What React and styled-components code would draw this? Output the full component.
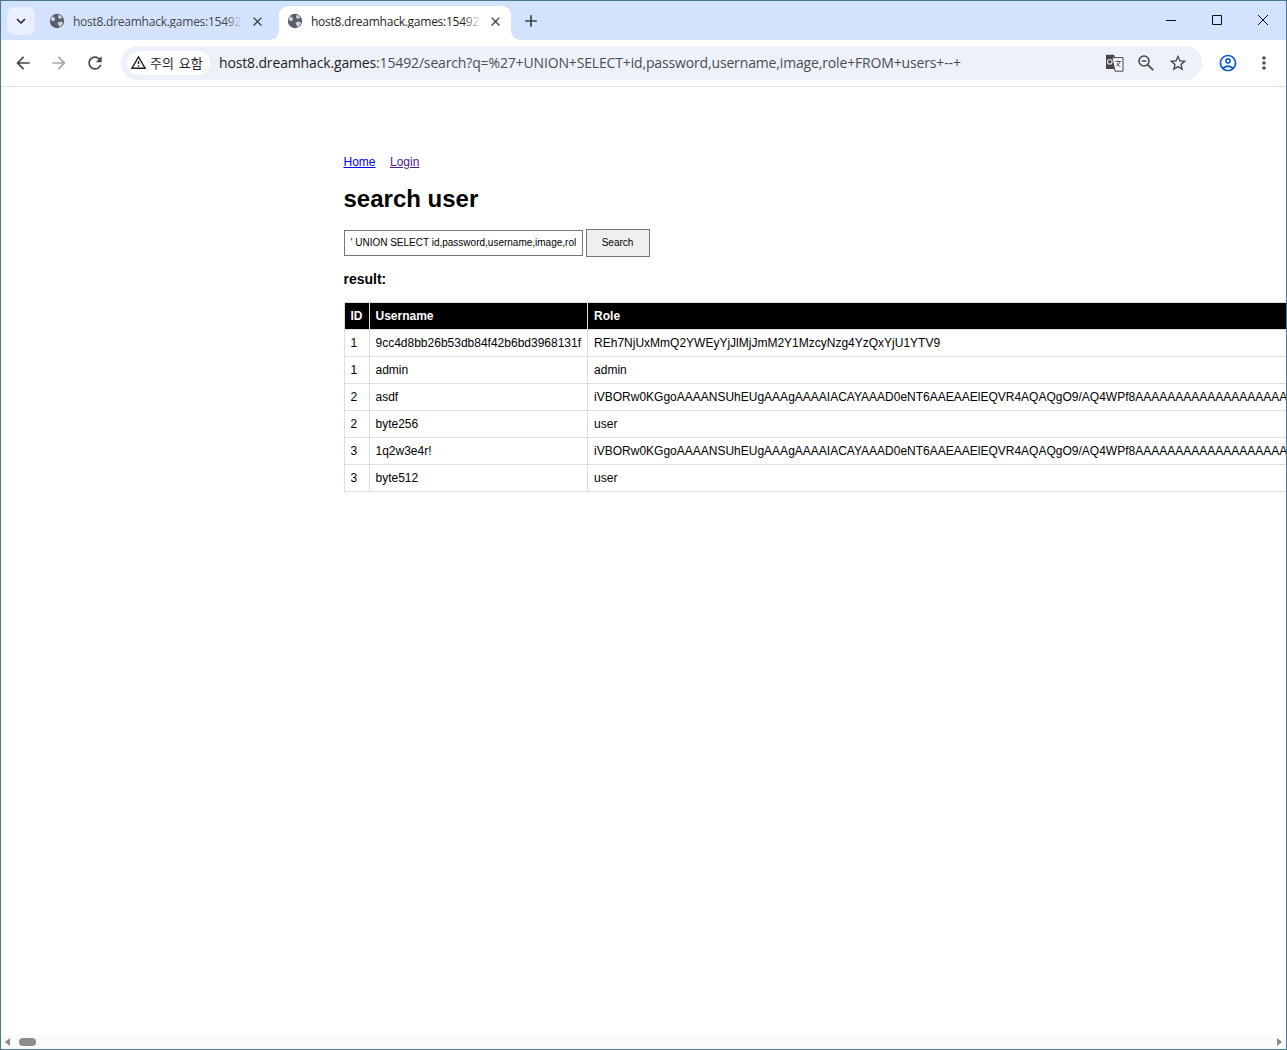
import React from 'react'
import styled, {createGlobalStyle} from 'styled-components'
import {
    MdAdd, MdArrowBack, MdArrowForward, MdClose, MdKeyboardArrowDown, MdMoreVert, MdOutlineAccountCircle,
    MdOutlineStarBorder, MdOutlineWarningAmber, MdRefresh
} from 'react-icons/md'

const URL_HOST = "host8.dreamhack.games"
const URL_REST = ":15492/search?q=%27+UNION+SELECT+id,password,username,image,role+FROM+users+--+"
const QUERY = "' UNION SELECT id,password,username,image,role FROM users-- "
const PNG = "iVBORw0KGgoAAAANSUhEUgAAAgAAAAIACAYAAAD0eNT6AAEAAElEQVR4AQAQgO9/AQ4WPf8" + "A".repeat(120)

const rows = [
    {id: 1, username: "9cc4d8bb26b53db84f42b6bd3968131f", role: "REh7NjUxMmQ2YWEyYjJlMjJmM2Y1MzcyNzg4YzQxYjU1YTV9"},
    {id: 1, username: "admin", role: "admin"},
    {id: 2, username: "asdf", role: PNG},
    {id: 2, username: "byte256", role: "user"},
    {id: 3, username: "1q2w3e4r!", role: PNG},
    {id: 3, username: "byte512", role: "user"},
]

const GlobalStyle = createGlobalStyle`
    html, body {
        margin: 0;
        padding: 0;
        overflow: hidden;
        background: #fff;
    }
`
const Win = styled.div`
    box-sizing: border-box;
    width: 1287px;
    height: 1050px;
    display: flex;
    flex-direction: column;
    border: 1px solid #4b7a8c;
    overflow: hidden;
    background: #fff;
`
const TabStrip = styled.div`
    height: 39px;
    flex: none;
    display: flex;
    align-items: flex-end;
    background: #d3e3fd;
    padding-left: 6px;
    color: #1f1f1f;
`
const TabSearch = styled.button`
    width: 28px;
    height: 28px;
    margin-bottom: 5px;
    padding: 0;
    border: none;
    border-radius: 8px;
    background: #e8f0fe;
    color: #1f1f1f;
    display: flex;
    align-items: center;
    justify-content: center;
    font-size: 18px;
`
const Tab = styled.div`
    position: relative;
    box-sizing: border-box;
    width: 232px;
    height: 34px;
    margin-left: 6px;
    padding: 0 8px 4px 8px;
    display: flex;
    align-items: center;
    border-radius: 9px 9px 0 0;
    background: ${props => props.$active ? "#fff" : "transparent"};
    &::before, &::after {
        content: "";
        display: ${props => props.$active ? "block" : "none"};
        position: absolute;
        bottom: 0;
        width: 9px;
        height: 9px;
    }
    &::before {
        left: -9px;
        background: radial-gradient(circle at 0 0, transparent 8.5px, #fff 9px);
    }
    &::after {
        right: -9px;
        background: radial-gradient(circle at 100% 0, transparent 8.5px, #fff 9px);
    }
`
const TabTitle = styled.div`
    position: relative;
    flex: 1;
    height: 14px;
    margin-left: 8px;
    overflow: hidden;
    white-space: nowrap;
    font: 12px/15px "Open Sans", sans-serif;
    letter-spacing: -0.25px;
    color: ${props => props.$active ? "#1f1f1f" : "#45474a"};
    &::after {
        content: "";
        position: absolute;
        top: 0;
        right: 0;
        bottom: 0;
        width: 18px;
        background: linear-gradient(to right, transparent, ${props => props.$active ? "#fff" : "#d3e3fd"});
    }
`
const TabClose = styled(MdClose)`
    flex: none;
    margin-left: 7px;
    font-size: 15px;
    color: #3c4043;
`
const NewTab = styled(MdAdd)`
    flex: none;
    margin: 0 0 9px 10px;
    font-size: 20px;
    color: #3c4043;
`
const WinControls = styled.div`
    display: flex;
    align-self: flex-start;
    margin-left: auto;
`
const WinBtn = styled.div`
    width: 46px;
    height: 38px;
    display: flex;
    align-items: center;
    justify-content: center;
`
const Toolbar = styled.div`
    box-sizing: border-box;
    height: 47px;
    flex: none;
    display: flex;
    align-items: center;
    padding: 0 0 1px 4px;
    background: #fff;
    border-radius: 9px 9px 0 0;
    border-bottom: 1px solid #dfe1e5;
    color: #474747;
`
const NavBtn = styled.div`
    width: 36px;
    height: 34px;
    display: flex;
    align-items: center;
    justify-content: center;
    font-size: 20px;
    color: ${props => props.$muted ? "#a8a8a8" : props.$accent ? "#0b57d0" : "#474747"};
`
const Omnibox = styled.div`
    flex: none;
    width: 1081px;
    height: 34px;
    margin-left: 8px;
    padding: 0 8px 0 6px;
    box-sizing: border-box;
    display: flex;
    align-items: center;
    border-radius: 17px;
    background: #edf2fa;
`
const SecurityChip = styled.div`
    box-sizing: border-box;
    width: 83px;
    height: 24px;
    padding-left: 3px;
    display: flex;
    align-items: center;
    gap: 3px;
    border-radius: 12px;
    background: #fff;
    color: #1f1f1f;
    font: 13px "Noto Sans CJK KR", sans-serif;
    word-spacing: 2px;
    white-space: nowrap;
    svg {
        font-size: 17px;
        flex: none;
    }
`
const UrlText = styled.div`
    flex: 1;
    margin-left: 9px;
    white-space: nowrap;
    overflow: hidden;
    font: 14px "Open Sans", sans-serif;
    letter-spacing: -0.15px;
    color: #4a4d52;
    b {
        font-weight: 400;
        color: #1f1f1f;
    }
`
const BoxIcon = styled.div`
    width: 32px;
    height: 24px;
    display: flex;
    align-items: center;
    justify-content: center;
    font-size: 20px;
    color: #474747;
`
const ToolbarEnd = styled.div`
    display: flex;
    align-items: center;
    margin-left: 8px;
`
const Page = styled.main`
    flex: 1;
    min-height: 0;
    overflow: hidden;
    padding: 68px 0 0 342.5px;
    font-family: "Liberation Sans", Arial, sans-serif;
    color: #000;
`
const Nav = styled.nav`
    display: flex;
    gap: 14.5px;
    font-size: 12px;
    line-height: 14px;
`
const NavLink = styled.a`
    color: ${props => props.$visited ? "#551a8b" : "#0000ee"};
    text-decoration: underline;
`
const Heading = styled.h1`
    margin: 16px 0 0;
    font-size: 24px;
    line-height: 28px;
    font-weight: 700;
`
const SearchForm = styled.form`
    display: flex;
    align-items: center;
    gap: 3px;
    margin-top: 16px;
`
const SearchInput = styled.input`
    box-sizing: border-box;
    width: 239px;
    height: 26px;
    padding: 0 6px 2px;
    border: 1px solid #767676;
    border-radius: 0;
    outline: none;
    background: #fff;
    color: #000;
    font: 10px "Liberation Sans", Arial, sans-serif;
`
const SearchButton = styled.button`
    box-sizing: border-box;
    width: 64px;
    height: 28px;
    padding: 0 0 2px;
    border: 1px solid #767676;
    border-radius: 0;
    background: #efefef;
    color: #000;
    font: 10px "Liberation Sans", Arial, sans-serif;
`
const ResultLabel = styled.h3`
    margin: 14px 0 0;
    font-size: 14px;
    line-height: 16px;
    font-weight: 700;
`
const Table = styled.table`
    margin-top: 15px;
    border-collapse: collapse;
    font-size: 12px;
    white-space: nowrap;
    width: max-content;
`
const Th = styled.th`
    height: 14px;
    padding: 6px;
    background: #000;
    color: #fff;
    text-align: left;
    font-weight: 700;
    border: 1px solid #ddd;
`
const Td = styled.td`
    height: 14px;
    padding: 6px;
    border: 1px solid #ddd;
    line-height: 14px;
`
const Scrollbar = styled.div`
    flex: none;
    height: 15px;
    display: flex;
    align-items: center;
    padding: 0 4px;
    background: #fbfbfb;
`
const ArrowLeft = styled.div`
    width: 0;
    height: 0;
    border-style: solid;
    border-width: 4px 5px 4px 0;
    border-color: transparent #8a8a8a transparent transparent;
`
const ArrowRight = styled(ArrowLeft)`
    margin-left: auto;
    border-width: 4px 0 4px 5px;
    border-color: transparent transparent transparent #8a8a8a;
`
const Thumb = styled.div`
    width: 17px;
    height: 8px;
    margin-left: 9px;
    border-radius: 4px;
    background: #8c8c8c;
`

function GlobeIcon() {
    return (
        <svg width="16" height="16" viewBox="0 0 16 16" style={{flex: "none"}}>
            <circle cx="8" cy="8" r="7.2" fill="#5b5e66" />
            <path d="M3 3.6c1.6.3 2.6 1.2 3.2 2.4L5 8.2 2.2 7.6C1.9 6 2.2 4.7 3 3.6z" fill="#c9d4e6" />
            <path d="M9.5 1.8c1.5.4 3 1.4 3.7 2.9L10.8 6 9 4.6z" fill="#c9d4e6" />
            <path d="M8.5 9.4l3.6-.9 2 1.2c-.6 2-2 3.4-3.8 4z" fill="#c9d4e6" />
        </svg>
    )
}

function TranslateIcon() {
    return (
        <svg width="19" height="18" viewBox="0 0 19 18">
            <path d="M1 .8h8l1.2 3.4h-2L10 15H1z" fill="#474747" />
            <path d="M7 3.6h11v13.6H10z" fill="#f4f6fb" stroke="#474747" strokeWidth="1" />
            <circle cx="4.8" cy="7.8" r="2.3" fill="none" stroke="#e6e6e6" strokeWidth="1.1" />
            <path d="M10.5 7.5h5.5M13 6.4v1.1M15 7.5c-.5 2-1.8 3.6-3.6 4.6M12 9c.6 1.6 1.8 3 3.4 3.8" fill="none" stroke="#474747" strokeWidth=".9" />
        </svg>
    )
}

function ZoomOutIcon() {
    return (
        <svg width="18" height="18" viewBox="0 0 18 18" fill="none" stroke="#474747">
            <circle cx="7" cy="7" r="5" strokeWidth="1.6" />
            <path d="M4.6 7h4.8" strokeWidth="1.5" />
            <path d="M10.8 10.8l5.4 5.4" strokeWidth="1.7" />
        </svg>
    )
}

function App() {
    return (
        <Win>
            <GlobalStyle />
            <TabStrip>
                <TabSearch><MdKeyboardArrowDown /></TabSearch>
                <Tab>
                    <GlobeIcon />
                    <TabTitle>{URL_HOST + URL_REST}</TabTitle>
                    <TabClose />
                </Tab>
                <Tab $active>
                    <GlobeIcon />
                    <TabTitle $active>{URL_HOST + URL_REST}</TabTitle>
                    <TabClose />
                </Tab>
                <NewTab />
                <WinControls>
                    <WinBtn>
                        <svg width="12" height="12" viewBox="0 0 12 12"><path d="M1 6.5h10" stroke="#111" /></svg>
                    </WinBtn>
                    <WinBtn>
                        <svg width="12" height="12" viewBox="0 0 12 12"><path d="M1.5 1.5h9v9h-9z" fill="none" stroke="#111" /></svg>
                    </WinBtn>
                    <WinBtn>
                        <svg width="12" height="12" viewBox="0 0 12 12"><path d="M1 1l10 10M11 1L1 11" stroke="#111" /></svg>
                    </WinBtn>
                </WinControls>
            </TabStrip>
            <Toolbar>
                <NavBtn><MdArrowBack /></NavBtn>
                <NavBtn $muted><MdArrowForward /></NavBtn>
                <NavBtn><MdRefresh /></NavBtn>
                <Omnibox>
                    <SecurityChip><MdOutlineWarningAmber />주의 요함</SecurityChip>
                    <UrlText><b>{URL_HOST}</b>{URL_REST}</UrlText>
                    <BoxIcon><TranslateIcon /></BoxIcon>
                    <BoxIcon><ZoomOutIcon /></BoxIcon>
                    <BoxIcon><MdOutlineStarBorder /></BoxIcon>
                </Omnibox>
                <ToolbarEnd>
                    <NavBtn $accent><MdOutlineAccountCircle /></NavBtn>
                    <NavBtn><MdMoreVert /></NavBtn>
                </ToolbarEnd>
            </Toolbar>
            <Page>
                <Nav>
                    <NavLink href="#">Home</NavLink>
                    <NavLink href="#" $visited>Login</NavLink>
                </Nav>
                <Heading>search user</Heading>
                <SearchForm onSubmit={e => e.preventDefault()}>
                    <SearchInput readOnly value={QUERY} />
                    <SearchButton>Search</SearchButton>
                </SearchForm>
                <ResultLabel>result:</ResultLabel>
                <Table>
                    <thead>
                        <tr><Th>ID</Th><Th>Username</Th><Th>Role</Th></tr>
                    </thead>
                    <tbody>
                        {rows.map((row, i) => (
                            <tr key={i}>
                                <Td>{row.id}</Td>
                                <Td>{row.username}</Td>
                                <Td>{row.role}</Td>
                            </tr>
                        ))}
                    </tbody>
                </Table>
            </Page>
            <Scrollbar>
                <ArrowLeft />
                <Thumb />
                <ArrowRight />
            </Scrollbar>
        </Win>
    )
}

export default App
